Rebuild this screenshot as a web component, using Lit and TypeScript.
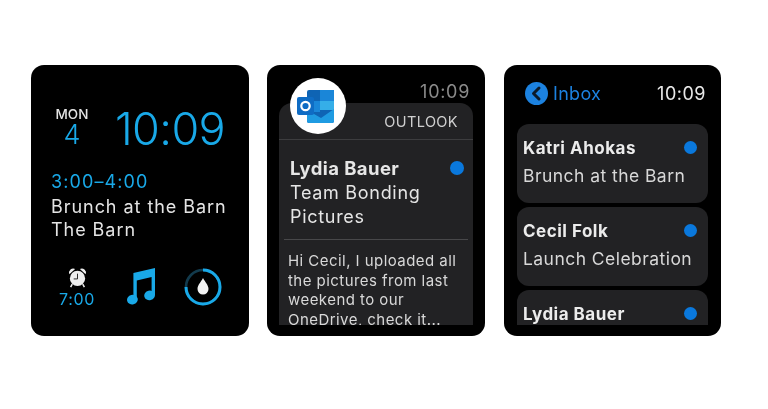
import { LitElement, html, css } from "lit";
import { customElement } from "lit/decorators.js";

@customElement("app-root")
export class AppRoot extends LitElement {
  static styles = css`
    :host {
      display: block;
      width: 768px;
      height: 409px;
      background: #fff;
      font-family: Inter, "Liberation Sans", sans-serif;
      overflow: hidden;
    }
    .row {
      display: flex;
      gap: 18px;
      padding: 65px 0 0 31px;
    }
    .watch {
      width: 218px;
      height: 271px;
      border-radius: 13px;
      background: #000;
      box-sizing: border-box;
      overflow: hidden;
      flex: none;
      filter: blur(0.4px);
    }
    .blue { color: #19a9e8; }

    /* face */
    .face { padding: 41px 20px 0; color: #e4e4e4; }
    .top { display: flex; align-items: flex-start; }
    .date {
      width: 44px;
      margin-left: -1px;
      display: flex;
      flex-direction: column;
      align-items: center;
    }
    .mon { font-size: 13.5px; line-height: 12px; font-weight: 500; margin-top: 2px; }
    .day { font-size: 27px; line-height: 26px; font-weight: 300; color: #19a9e8; margin-top: 2px; }
    .big {
      margin-left: 21px;
      font-size: 45px;
      line-height: 46px;
      font-weight: 300;
      letter-spacing: -0.6px;
      color: #19a9e8;
    }
    .event { margin-top: 18px; font-size: 18px; line-height: 23.5px; letter-spacing: 0.95px; }
    .event .blue { letter-spacing: 1.1px; margin-bottom: 1px; }
    .comps { display: flex; align-items: center; margin-top: 24px; }
    .alarm { width: 54px; margin-left: -1px; display: flex; flex-direction: column; align-items: center; gap: 2px; }
    .alarm svg { margin-top: 1px; }
    .alarm span { font-size: 16px; line-height: 18px; letter-spacing: 0.7px; color: #19a9e8; }
    .note { margin-left: 23px; display: block; }
    .ring { margin-left: 29px; display: block; }

    /* notification */
    .notif { position: relative; padding: 16px 12px 0; }
    .clock { text-align: right; padding-right: 3px; font-size: 18px; line-height: 21px; letter-spacing: 0.7px; color: #8a8a8a; }
    .panel {
      height: 222px;
      margin-top: 1px;
      background: #222224;
      border-radius: 13px 13px 0 0;
      overflow: hidden;
      color: #e6e6e6;
    }
    .brand {
      height: 37px;
      box-sizing: border-box;
      border-bottom: 1px solid #3d3d3f;
      text-align: right;
      padding: 9px 15px 0 0;
      font-size: 14.5px;
      line-height: 20px;
      letter-spacing: 0.4px;
      color: #cfcfcf;
    }
    .subject { position: relative; margin: 0 5px; padding: 16px 6px 10px; border-bottom: 1px solid #48484a; font-size: 18px; line-height: 24px; letter-spacing: 0.7px; }
    .name { font-size: 18.5px; font-weight: 700; letter-spacing: 0.4px; margin-bottom: 1px; }
    .subject .dot { position: absolute; right: 4px; top: 21px; }
    .dot { width: 14px; height: 14px; border-radius: 50%; background: #0a78dc; }
    .body { padding: 11px 9px 0; font-size: 15px; line-height: 19.7px; letter-spacing: 0.45px; color: #d8d8d8; white-space: nowrap; }
    .badge {
      position: absolute;
      left: 23px;
      top: 13px;
      width: 56px;
      height: 56px;
      border-radius: 50%;
      background: #fff;
    }
    .badge svg { display: block; }

    /* inbox */
    .inbox { width: 217px; margin-left: 1px; padding: 15px 13px 0; height: 271px; box-sizing: border-box; }
    .clip { height: 245px; overflow: hidden; }
    .head { display: flex; align-items: center; height: 27px; margin-bottom: 17px; padding: 0 2px 0 8px; }
    .back { width: 23px; height: 23px; flex: none; display: block; }
    .inbox-label { margin-left: 5px; font-size: 18px; letter-spacing: 0.3px; color: #1c82e0; }
    .inbox-time { margin-left: auto; font-size: 18px; letter-spacing: 0.5px; color: #e8e8e8; }
    .list { display: flex; flex-direction: column; gap: 4px; }
    .mail {
      flex: none;
      height: 79px;
      box-sizing: border-box;
      background: #222224;
      border-radius: 12px;
      padding: 13px 11px 0 6px;
      color: #d8d8d8;
    }
    .mail-top { display: flex; align-items: center; justify-content: space-between; font-size: 17px; line-height: 22px; font-weight: 700; letter-spacing: 0.5px; color: #ececec; }
    .mail-top .dot { width: 13px; height: 13px; margin-bottom: 2px; }
    .mail-sub { margin-top: 6px; font-size: 17.5px; line-height: 22px; letter-spacing: 0.45px; white-space: nowrap; }
  `;

  render() {
    return html`
      <div class="row">
        <div class="watch face">
          <div class="top">
            <div class="date"><div class="mon">MON</div><div class="day">4</div></div>
            <div class="big">10:09</div>
          </div>
          <div class="event">
            <div class="blue">3:00–4:00</div>
            <div>Brunch at the Barn</div>
            <div>The Barn</div>
          </div>
          <div class="comps">
            <div class="alarm">
              <svg width="21" height="21" viewBox="0 0 22 22">
                <path d="M2.5 7.5 A4.4 4.4 0 0 1 8.5 2 Z M19.5 7.5 A4.4 4.4 0 0 0 13.5 2 Z" fill="#eee" />
                <circle cx="11" cy="12" r="8" fill="#eee" />
                <path d="M11 7 V12.5 H7" fill="none" stroke="#222" stroke-width="1" />
                <path d="M5.5 18 L3.8 21 M16.5 18 L18.2 21" stroke="#eee" stroke-width="1.6" />
              </svg>
              <span>7:00</span>
            </div>
            <svg class="note" width="28" height="37" viewBox="0 0 28 37">
              <path d="M6.4 5 L28 0 V27 H24.6 V9 L9.8 12.4 V31.5 H6.4 Z" fill="#19a9e8" />
              <ellipse cx="5.4" cy="31.6" rx="5.4" ry="4.8" transform="rotate(-14 5.4 31.6)" fill="#19a9e8" />
              <ellipse cx="22.6" cy="27.4" rx="5.4" ry="4.8" transform="rotate(-14 22.6 27.4)" fill="#19a9e8" />
            </svg>
            <svg class="ring" width="38" height="38" viewBox="0 0 38 38">
              <circle cx="19" cy="19" r="17" fill="none" stroke="#123a4c" stroke-width="2.6" />
              <path d="M19 2 A17 17 0 1 1 2 19" fill="none" stroke="#19a9e8" stroke-width="3" />
              <path d="M19 10 C21 14 24.5 17 24.5 21 A5.5 5.5 0 0 1 13.5 21 C13.5 17 17 14 19 10 Z" fill="#f2f2f2" />
            </svg>
          </div>
        </div>

        <div class="watch notif">
          <div class="clock">10:09</div>
          <div class="panel">
            <div class="brand">OUTLOOK</div>
            <div class="subject">
              <div class="name">Lydia Bauer</div>
              <div>Team Bonding</div>
              <div>Pictures</div>
              <div class="dot"></div>
            </div>
            <div class="body">Hi Cecil, I uploaded all<br />the pictures from last<br />weekend to our<br />OneDrive, check it...</div>
          </div>
          <div class="badge">
            <svg width="56" height="56" viewBox="0 0 56 56">
              <path d="M17 14 Q17 12 19 12 H42 Q44 12 44 14 V43 Q44 45 42 45 H19 Q17 45 17 43 Z" fill="#0f64b4" />
              <rect x="30" y="12" width="14" height="11" fill="#1a86d8" />
              <rect x="17" y="23" width="13" height="11" fill="#1a86d8" />
              <rect x="30" y="23" width="14" height="9" fill="#35aee8" />
              <path d="M17 32 L31 40 L44 31 V43 Q44 45 42 45 H19 Q17 45 17 43 Z" fill="#1f9be2" />
              <rect x="7" y="19" width="17" height="18" rx="2" fill="#0f6cc4" />
              <circle cx="15.5" cy="28" r="4.2" fill="none" stroke="#fff" stroke-width="2.2" />
            </svg>
          </div>
        </div>

        <div class="watch inbox">
          <div class="clip">
            <div class="head">
              <svg class="back" viewBox="0 0 23 23">
                <circle cx="11.5" cy="11.5" r="11.5" fill="#1c82e0" />
                <path d="M14 6 L8.5 11.5 L14 17" fill="none" stroke="#0b1a2a" stroke-width="3" stroke-linecap="round" stroke-linejoin="round" />
              </svg>
              <span class="inbox-label">Inbox</span>
              <span class="inbox-time">10:09</span>
            </div>
            <div class="list">
              <div class="mail">
                <div class="mail-top">Katri Ahokas<div class="dot"></div></div>
                <div class="mail-sub">Brunch at the Barn</div>
              </div>
              <div class="mail">
                <div class="mail-top">Cecil Folk<div class="dot"></div></div>
                <div class="mail-sub">Launch Celebration</div>
              </div>
              <div class="mail">
                <div class="mail-top">Lydia Bauer<div class="dot"></div></div>
              </div>
            </div>
          </div>
        </div>
      </div>
    `;
  }
}
